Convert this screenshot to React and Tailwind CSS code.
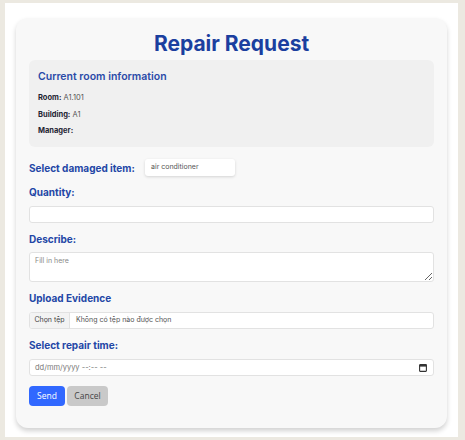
import React from 'react';

const labelCls = "block text-[10px] leading-4 font-bold text-[#2346a6]";
const boxCls = "w-full bg-white border border-[#e2e2e2] rounded-[3px]";

const App = () => {
    return (
        <div className="w-[465px] h-[440px] bg-[#ece9e1] pt-[3px] pl-[5px]" style={{ fontFamily: 'Inter, "Noto Sans", sans-serif' }}>
            <div className="w-[453px] h-[434px] bg-white pt-[15px] pl-[11px]">
                <div className="w-[431px] h-[410px] bg-[#f8f8f8] rounded-[12px] shadow-[0_3px_5px_rgba(0,0,0,0.18)] px-[13px] pt-[12px]">
                    <h1 className="text-center text-[21px] leading-[28px] font-bold text-[#1b3f9f]">Repair Request</h1>

                    <div className="mt-[2px] h-[87px] bg-[#f0f0f0] rounded-[6px] px-[9px] pt-[9px]">
                        <h2 className="text-[10.5px] leading-4 font-semibold text-[#2a4aa8]">Current room information</h2>
                        <div className="mt-[7px] flex flex-col gap-[4px] text-[7.5px] leading-[12.5px] text-[#555]">
                            <p><span className="font-bold text-[#1f2533]">Room:</span> A1.101</p>
                            <p><span className="font-bold text-[#1f2533]">Building:</span> A1</p>
                            <p><span className="font-bold text-[#1f2533]">Manager:</span></p>
                        </div>
                    </div>

                    <div className="mt-[12px] flex items-center h-[17px]">
                        <span className={labelCls + " w-[116px] shrink-0"}>Select damaged item:</span>
                        <div className="w-[90px] h-[17px] bg-white rounded-[3px] shadow-[0_1px_3px_rgba(0,0,0,0.15)] flex items-center px-[6px] text-[7px] text-[#555]">air conditioner</div>
                    </div>

                    <label className={labelCls + " mt-[8px]"}>Quantity:</label>
                    <div className={boxCls + " mt-[6px] h-[17px]"}></div>

                    <label className={labelCls + " mt-[8px]"}>Describe:</label>
                    <textarea
                        placeholder="Fill in here"
                        className={boxCls + " mt-[5px] h-[30px] block px-[5px] py-[3px] text-[7px] leading-[10px] placeholder:text-[#888] outline-none"}
                    />

                    <label className={labelCls + " mt-[8px]"}>Upload Evidence</label>
                    <div className={boxCls + " mt-[6px] h-[17px] flex items-center text-[7px] text-[#555] overflow-hidden"}>
                        <span className="h-full w-[40px] bg-[#f3f3f3] border-r border-[#e2e2e2] flex items-center justify-center text-[#444]">Chọn tệp</span>
                        <span className="pl-[6px]">Không có tệp nào được chọn</span>
                    </div>

                    <label className={labelCls + " mt-[8px]"}>Select repair time:</label>
                    <div className={boxCls + " mt-[6px] h-[17px] flex items-center justify-between px-[5px] text-[7.5px] text-[#777]"}>
                        <span>dd/mm/yyyy --:-- --</span>
                        <svg width="8" height="8" viewBox="0 0 8 8" className="mr-[1px]">
                            <rect x="0.6" y="0.6" width="6.8" height="6.8" rx="0.6" fill="none" stroke="#333" strokeWidth="1.1" />
                            <rect x="0.6" y="0.6" width="6.8" height="2" fill="#333" />
                        </svg>
                    </div>

                    <div className="mt-[10px] flex gap-[2px]">
                        <button className="w-[36px] h-[20px] rounded-[4px] bg-[#3168ff] text-white text-[8.5px]" style={{ fontFamily: '"Open Sans", sans-serif' }}>Send</button>
                        <button className="w-[41px] h-[20px] rounded-[4px] bg-[#c9c9c9] text-[#444] text-[8.5px]" style={{ fontFamily: '"Open Sans", sans-serif' }}>Cancel</button>
                    </div>
                </div>
            </div>
        </div>
    );
};

export default App;
